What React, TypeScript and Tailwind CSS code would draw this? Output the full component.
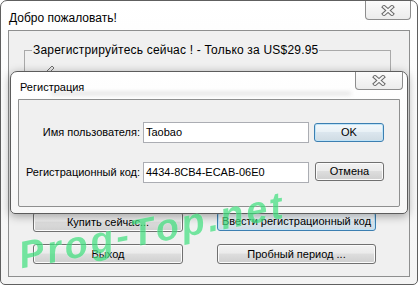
import React from "react";

const ui = "font-['Liberation_Sans',Arial,sans-serif] text-[11px] text-black";

function CloseGlyph() {
  return (
    <svg width="14" height="11" viewBox="0 0 14 11">
      <path d="M3 2 L11 9 M11 2 L3 9" stroke="#6a6a6a" strokeWidth="4" strokeLinecap="square" />
      <path d="M3 2 L11 9 M11 2 L3 9" stroke="#f6f6f6" strokeWidth="2" strokeLinecap="square" />
    </svg>
  );
}

function CloseButton({ className }: { className: string }) {
  return (
    <div
      className={
        "flex items-center justify-center border border-t-0 border-[#8d8d8d] rounded-b-[4px] bg-[linear-gradient(180deg,#fbfbfb_0%,#ececec_100%)] " +
        className
      }
    >
      <CloseGlyph />
    </div>
  );
}

interface WinButtonProps {
  children: React.ReactNode;
  focused?: boolean;
  className?: string;
}

function WinButton(props: WinButtonProps) {
  const look = props.focused
    ? "border-[#3c7fb1] shadow-[inset_0_0_0_1px_#bfe3f7] bg-[linear-gradient(180deg,#f3f8fb_0%,#e9f1f6_45%,#dbe6ee_50%,#cfdbe3_100%)]"
    : "border-[#707070] shadow-[inset_0_0_0_1px_#fbfbfb] bg-[linear-gradient(180deg,#f2f2f2_0%,#ebebeb_45%,#dddddd_50%,#cfcfcf_100%)]";
  return (
    <div
      className={
        "flex items-center justify-center border rounded-[3px] leading-none " + look + " " + (props.className ?? "")
      }
    >
      {props.children}
    </div>
  );
}

function Field({ label, value }: { label: string; value: string }) {
  return (
    <div className="flex items-center">
      <span className="w-[121px] text-right">{label}</span>
      <div className="ml-[3px] w-[166px] h-[21px] border border-[#abadb3] bg-white flex items-center pl-[2px]">
        {value}
      </div>
    </div>
  );
}

function RegistrationDialog() {
  return (
    <div className="absolute left-[10px] top-[71px] w-[398px] h-[143px] flex flex-col border border-[#5c5c5c] rounded-t-[7px] rounded-b-[5px] bg-[linear-gradient(180deg,#ffffff_0%,#f7f7f7_100%)] shadow-[0_2px_10px_rgba(0,0,0,0.35)]">
      <div className="relative h-[27px] flex items-start justify-between">
        <div className="absolute left-[40px] top-[20px] w-[300px] h-[3px] bg-[#c8c8c8] blur-[2px] opacity-60" />
        <span className="relative pl-[9px] pt-[7px]">Регистрация</span>
        <CloseButton className="relative mr-[4px] w-[48px] h-[18px]" />
      </div>
      <div className="flex-1 mx-[7px] mb-[6px] border border-[#8e8f8f] rounded-b-[2px] bg-[#f0f0f0] pt-[22px] flex flex-col gap-[19px]">
        <div className="flex items-center">
          <Field label="Имя пользователя:" value="Taobao" />
          <WinButton focused className="ml-[5px] w-[70px] h-[19px]">OK</WinButton>
        </div>
        <div className="flex items-center">
          <Field label="Регистрационный код:" value="4434-8CB4-ECAB-06E0" />
          <WinButton className="ml-[6px] w-[69px] h-[19px] -mt-[3px]">Отмена</WinButton>
        </div>
      </div>
    </div>
  );
}

function Pencil() {
  return (
    <svg width="16" height="14" viewBox="0 0 16 14">
      <path d="M3 12 L4 9 L12 1 L14 3 L6 11 Z" fill="#e8e8e8" stroke="#707070" strokeWidth="1" />
      <path d="M2 13 L4 9" stroke="#555" strokeWidth="1" />
    </svg>
  );
}

export default function App() {
  return (
    <div className={"relative w-[419px] h-[285px] bg-white overflow-hidden " + ui}>
      <div className="w-[418px] h-[285px] flex flex-col border border-[#5f5f5f] rounded-t-[7px] rounded-b-[5px] bg-[linear-gradient(180deg,#ffffff_0%,#f4f4f4_100%)] px-[7px] pb-[7px]">
        <div className="h-[29px] flex items-start justify-between">
          <span className="pl-[1px] pt-[8px] text-[12px]">Добро пожаловать!</span>
          <CloseButton className="mr-[-1px] w-[46px] h-[19px]" />
        </div>
        <div className="flex-1 border border-[#8e8f8f] bg-[#f0f0f0] flex flex-col">
          <fieldset className="ml-[15px] mt-[12px] w-[367px] h-[160px] border border-[#a9a9a9] px-0">
            <legend className="ml-[7px] px-[1px] text-[12px] leading-[14px] tracking-[0.2px]">
              Зарегистрируйтесь сейчас ! - Только за US$29.95
            </legend>
            <div className="flex items-center gap-[8px] pt-[4px] pl-[15px]">
              <Pencil />
              <span className="pt-[6px] text-[#888]">Пожалуйста, укажите ваш адрес E-Mail</span>
            </div>
          </fieldset>
          <div className="ml-[24px] mt-[9px] grid grid-cols-[150px_159px] gap-x-[34px] gap-y-[12px]">
            <WinButton className="h-[20px]">Купить сейчас...</WinButton>
            <WinButton focused className="h-[19px]">Ввести регистрационный код</WinButton>
            <WinButton className="h-[20px]">Выход</WinButton>
            <WinButton className="h-[20px]">Пробный период ...</WinButton>
          </div>
        </div>
      </div>
      <RegistrationDialog />
      <div className="absolute left-[2px] top-[211px] w-[300px] whitespace-nowrap text-center -rotate-[11deg] text-[38px] font-black italic tracking-[3px] leading-none text-[#3fe07d] opacity-70 [text-shadow:0_0_1px_#ffffff] font-['Liberation_Sans',Arial,sans-serif] pointer-events-none">
        Prog-Top.net
      </div>
    </div>
  );
}
